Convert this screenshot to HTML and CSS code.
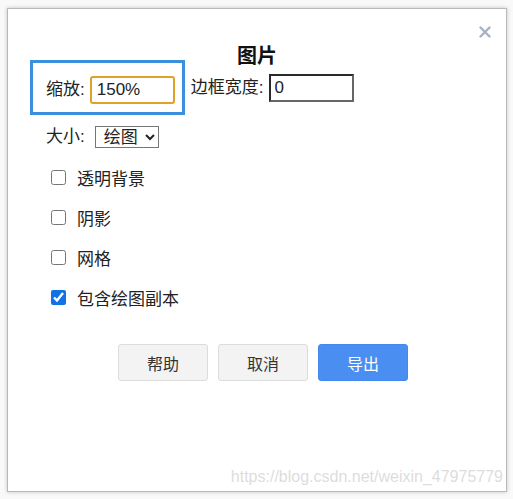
FILE: index.html
```html
<!DOCTYPE html>
<html lang="zh-CN">
<head>
<meta charset="utf-8">
<title>图片</title>
<link rel="stylesheet" href="styles.css">
</head>
<body>
<div class="dialog">
  <svg class="close" width="12" height="12" viewBox="0 0 12 12"><path d="M1.5 1.5 L10.5 10.5 M10.5 1.5 L1.5 10.5" stroke="#a3b1c2" stroke-width="2.4" stroke-linecap="round"/></svg>
  <div class="title">图片</div>
  <div class="row-zoom">
    <div class="highlight">
      <span class="label">缩放:</span>
      <input class="field field-zoom" type="text" value="150%">
    </div>
    <div class="border-group">
      <span class="label">边框宽度:</span>
      <input class="field field-border" type="text" value="0">
    </div>
  </div>
  <div class="row-size">
    <span class="label">大小:</span>
    <select class="size-select"><option>绘图</option></select>
  </div>
  <div class="checks">
    <label class="check"><input type="checkbox"><span>透明背景</span></label>
    <label class="check"><input type="checkbox"><span>阴影</span></label>
    <label class="check"><input type="checkbox"><span>网格</span></label>
    <label class="check"><input type="checkbox" checked><span>包含绘图副本</span></label>
  </div>
  <div class="buttons">
    <button class="btn">帮助</button>
    <button class="btn">取消</button>
    <button class="btn btn-primary">导出</button>
  </div>
</div>
<div class="watermark">https://blog.csdn.net/weixin_47975779</div>
</body>
</html>
```
FILE: styles.css
```css
html, body {
  margin: 0;
  padding: 0;
}
body {
  background: #f9f9f9;
  font-family: "Liberation Sans", "Noto Sans CJK SC", sans-serif;
  color: #222;
  width: 513px;
  height: 499px;
  position: relative;
  overflow: hidden;
}
.dialog {
  position: relative;
  box-sizing: border-box;
  margin: 8px 0 0 7px;
  width: 500px;
  height: 484px;
  background: #fff;
  border: 1px solid #b9b9b9;
  box-shadow: 0 0 4px rgba(0,0,0,0.22);
  padding: 41px 0 0 22px;
}
.close {
  position: absolute;
  top: 17px;
  right: 15px;
}
.title {
  text-align: center;
  font-size: 20px;
  font-weight: bold;
  line-height: 10px;
  height: 10px;
  color: #111;
  padding-right: 22px;
  padding-top: 1px;
  margin-bottom: -1px;
}
.label {
  font-size: 17px;
  line-height: 22px;
  color: #222;
}
.row-zoom {
  display: flex;
  align-items: flex-start;
}
.highlight {
  display: flex;
  align-items: center;
  gap: 5px;
  border: 3px solid #3b8fdc;
  padding: 13px 7px 8px 13px;
}
.border-group {
  display: flex;
  align-items: center;
  gap: 6px;
  margin: 14px 0 0 6px;
}
.field {
  box-sizing: border-box;
  height: 28px;
  width: 85px;
  font-family: "Liberation Sans", "Noto Sans CJK SC", sans-serif;
  font-size: 17px;
  color: #222;
  padding: 0 5px;
  outline: none;
  background: #fff;
}
.field-zoom {
  border: 2px solid #e0a125;
  border-radius: 3px;
}
.field-border {
  border: 2px solid #2a2a2a;
  border-right-color: #666;
  border-bottom-color: #666;
  padding-left: 3px;
}
.row-size {
  display: flex;
  align-items: center;
  gap: 10px;
  margin: 11px 0 0 16px;
}
.size-select {
  box-sizing: border-box;
  width: 64px;
  height: 22px;
  font-family: "Liberation Sans", "Noto Sans CJK SC", sans-serif;
  font-size: 17px;
  color: #222;
  border: 1px solid #767676;
  border-radius: 0;
  background: #fff;
  padding: 0 0 0 4px;
}
.checks {
  margin: 9px 0 0 21px;
  display: flex;
  flex-direction: column;
}
.check {
  display: flex;
  align-items: center;
  height: 40px;
  font-size: 17px;
  color: #222;
}
.check input {
  width: 15px;
  height: 15px;
  margin: 0 11px 0 0;
  accent-color: #0f72e6;
}
.buttons {
  display: flex;
  gap: 10px;
  margin: 27px 0 0 88px;
}
.btn {
  box-sizing: border-box;
  width: 90px;
  height: 37px;
  border: 1px solid #dcdcdc;
  border-radius: 3px;
  background: #f3f3f3;
  color: #333;
  font-family: "Liberation Sans", "Noto Sans CJK SC", sans-serif;
  font-size: 16px;
  padding: 0;
}
.btn-primary {
  background: #4a8ef2;
  border-color: #4488ec;
  color: #fff;
}
.watermark {
  position: absolute;
  right: 10px;
  top: 468px;
  font-size: 16px;
  color: rgba(205,205,205,0.7);
  font-family: "Liberation Sans", sans-serif;
  white-space: nowrap;
}
```
